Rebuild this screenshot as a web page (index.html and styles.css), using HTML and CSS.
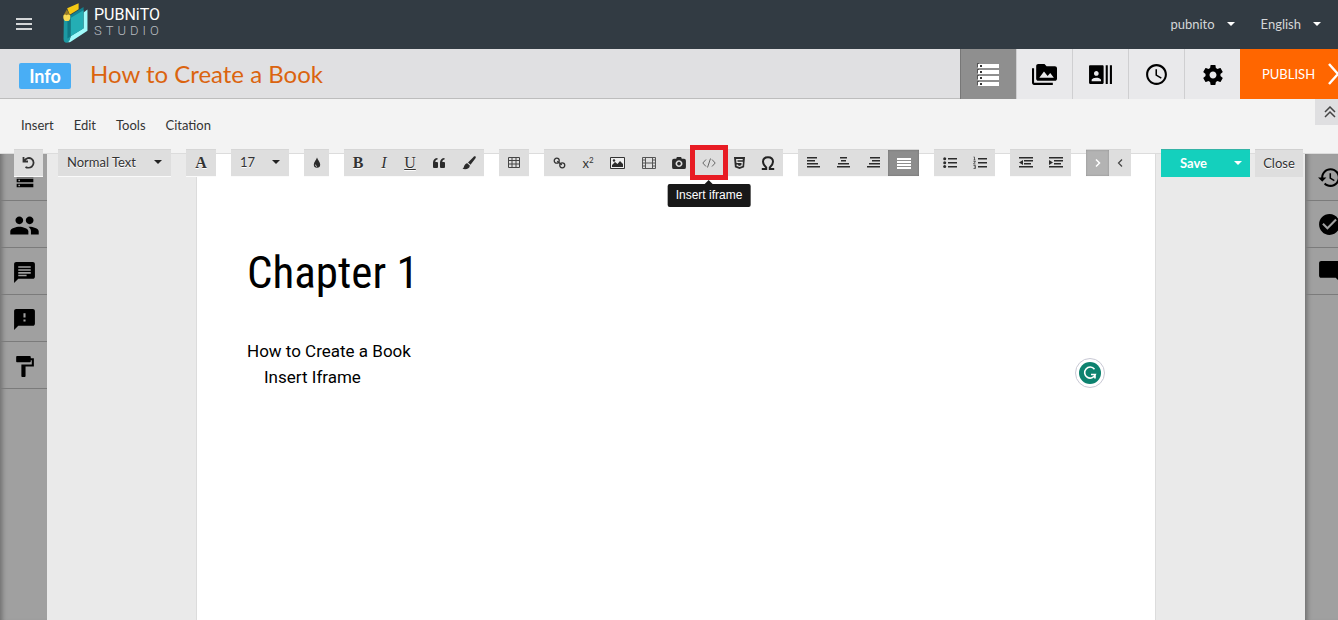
FILE: index.html
```html
<!DOCTYPE html>
<html lang="en">
<head>
<meta charset="utf-8">
<title>Pubnito Studio</title>
<meta name="viewport" content="width=device-width, initial-scale=1">
<link rel="stylesheet" href="styles.css">
</head>
<body>
<header class="topbar">
  <button class="menu-toggle" aria-label="Open menu"><span></span><span></span><span></span></button>
  <a class="brand" href="#">
    <svg class="brand-mark" viewBox="0 0 75 122" aria-hidden="true">
      <path fill="#f5c914" d="M12 16L47 1v18L20 36z"/>
      <path fill="#128391" d="M20 38L62 12v14L22 50z"/>
      <path fill="#a0fbfb" d="M62 29l12-9v65L23 118q-5 3-12 1 9-2 12-18l39-24z"/>
      <path fill="#24aeb4" d="M22 46l40-24v56L22 102z"/>
      <path fill="#1c99a3" d="M2 48h9l11-2v56q-1 16-11 19-10 0-10-12z"/>
      <path fill="#0f7884" d="M13 52l9-5v55l-9 6z"/>
      <path fill="#987c26" d="M11 20l10 17-10 3-10-3z"/>
      <path fill="#f8dc55" d="M1 37q5-4 9 0 6-4 11 0c2 9-1 17-6 18H6C1 52-1 45 1 37z"/>
    </svg>
    <span class="brand-text"><b>PUBNiTO</b><i>STUDIO</i></span>
  </a>
  <nav class="account" aria-label="Account">
    <button class="account-item">pubnito <span class="caret"></span></button>
    <button class="account-item">English <span class="caret"></span></button>
  </nav>
</header>

<section class="titlebar">
  <button class="info">Info</button>
  <h1 class="book-title">How to Create a Book</h1>
  <nav class="tabs" aria-label="Book sections">
    <button class="tab tab-active" aria-label="Contents"><svg viewBox="0 0 24 26" width="24" height="26"><path fill="#555" d="M0 1h2v4H0zM0 7h2v4H0zM0 13h2v4H0zM0 19h2v4H0z"/><path fill="#fff" d="M1 2h21v4H1zM1 8h21v4H1zM1 14h21v4H1zM1 20h21v4H1z"/><path fill="#333" d="M3 3h2v2H3zM3 9h2v2H3zM3 15h2v2H3zM3 21h2v2H3z"/></svg></button>
    <button class="tab" aria-label="Media"><svg viewBox="0 0 24 24" width="25" height="25"><path d="M2 6H0v5h.01L0 20c0 1.100.9 2 2 2h18v-2H2V6zm20-2h-8l-2-2H6c-1.100 0-1.990.9-1.990 2L4 16c0 1.100.9 2 2 2h16c1.100 0 2-.9 2-2V6c0-1.100-.9-2-2-2zM7 15l4.500-6 3.500 4.510 2.500-3.010L21 15H7z"/></svg></button>
    <button class="tab" aria-label="Authors"><svg viewBox="0 0 24 24" width="25" height="25"><path d="M21 3v18h2V3h-2zm-4 18h2V3h-2v18zM14 3H2c-.55 0-1 .45-1 1v16c0 .55.45 1 1 1h12c.55 0 1-.45 1-1V4c0-.55-.45-1-1-1zM8 8.750c1.240 0 2.250 1.010 2.250 2.250S9.240 13.250 8 13.250 5.750 12.240 5.750 11 6.760 8.750 8 8.750zM12.500 18.500h-9v-1.250c0-1.500 3-2.250 4.500-2.250s4.500.75 4.500 2.250z"/></svg></button>
    <button class="tab" aria-label="History"><svg viewBox="0 0 24 24" width="25" height="25"><path d="M11.990 2C6.470 2 2 6.480 2 12s4.470 10 9.990 10C17.520 22 22 17.520 22 12S17.520 2 11.990 2zM12 20c-4.420 0-8-3.580-8-8s3.580-8 8-8 8 3.580 8 8-3.580 8-8 8zm.5-13H11v6l5.250 3.150.75-1.230-4.500-2.670z"/></svg></button>
    <button class="tab" aria-label="Settings"><svg viewBox="0 0 24 24" width="24" height="24"><path d="M19.430 12.980c.04-.32.07-.64.07-.98s-.03-.66-.07-.98l2.110-1.650c.19-.15.24-.42.12-.64l-2-3.460c-.12-.22-.39-.3-.61-.22l-2.490 1c-.52-.4-1.080-.73-1.690-.98l-.38-2.650C14.460 2.180 14.250 2 14 2h-4c-.25 0-.46.18-.49.42l-.38 2.650c-.61.25-1.170.59-1.690.98l-2.490-1c-.23-.09-.49 0-.61.22l-2 3.460c-.13.22-.07.49.12.64l2.110 1.650c-.04.32-.07.65-.07.98s.03.66.07.98l-2.110 1.650c-.19.15-.24.42-.12.64l2 3.460c.12.22.39.3.61.22l2.490-1c.52.4 1.080.73 1.690.98l.38 2.650c.03.24.24.42.49.42h4c.25 0 .46-.18.49-.42l.38-2.650c.61-.25 1.170-.59 1.690-.98l2.490 1c.23.09.49 0 .61-.22l2-3.460c.12-.22.07-.49-.12-.64l-2.110-1.650zM12 15.500c-1.930 0-3.500-1.570-3.500-3.500s1.570-3.500 3.500-3.500 3.500 1.570 3.500 3.500-1.570 3.500-3.500 3.500z"/></svg></button>
  </nav>
  <button class="publish">PUBLISH <svg viewBox="0 0 14 24" width="14" height="24"><path d="M2 2l9 10-9 10" fill="none" stroke="#fff" stroke-width="2.500"/></svg></button>
</section>

<section class="menubar">
  <nav class="menus" aria-label="Editor menu">
    <button class="menu">Insert</button>
    <button class="menu">Edit</button>
    <button class="menu">Tools</button>
    <button class="menu">Citation</button>
  </nav>
  <button class="collapse" aria-label="Collapse"><svg viewBox="0 0 12 12" width="12" height="12"><path d="M1 6l5-5 5 5M1 11l5-5 5 5" fill="none" stroke="#444" stroke-width="1.500"/></svg></button>
</section>

<main class="workspace">
  <div class="toolbar" role="toolbar" aria-label="Formatting">
    <div class="group"><button class="tool w29" aria-label="Undo"><svg viewBox="0 0 13 13" width="13" height="13"><path d="M1.500 1v4.500H6M2 5.200C4 1.600 7.500 1.500 9.500 2.700c3 2 2.500 6.300.2 8C8 12 5 12 3.500 11" fill="none" stroke="#333" stroke-width="1.800"/></svg></button></div>
    <div class="group select-group w113"><select class="pick" aria-label="Text style"><option>Normal Text</option></select><span class="caret dark"></span></div>
    <div class="group"><button class="tool serif w30" aria-label="Font"><b>A</b></button></div>
    <div class="group select-group w58"><select class="pick" aria-label="Font size"><option>17</option></select><span class="caret dark"></span></div>
    <div class="group"><button class="tool w25" aria-label="Text color"><svg viewBox="0 0 10 14" width="8" height="12"><path d="M5 0c.8 3 4 5.500 4 9a4 4 0 0 1-8 0c0-3.500 3.200-6 4-9z"/><path d="M3 9q0 2 2 2.500" fill="none" stroke="#ddd"/></svg></button></div>
    <div class="group">
      <button class="tool serif w28" aria-label="Bold"><b>B</b></button>
      <button class="tool serif w24" aria-label="Italic"><i>I</i></button>
      <button class="tool serif w28" aria-label="Underline"><u>U</u></button>
      <button class="tool w30" aria-label="Quote"><svg viewBox="0 0 14 12" width="14" height="12"><path d="M5.500 1v1.500C4 2.700 3.300 3.800 3.300 5H5q1 0 1 1v4q0 1-1 1H2q-1 0-1-1V5.500C1 3 3 1 5.500 1zM12.500 1v1.500C11 2.700 10.300 3.800 10.300 5H12q1 0 1 1v4q0 1-1 1H9q-1 0-1-1V5.500C8 3 10 1 12.500 1z"/></svg></button>
      <button class="tool w30" aria-label="Brush"><svg viewBox="0 0 14 14" width="14" height="14"><path d="M13.500.5c.8.8-.2 2-.2 2L8.500 8.800 6 6.500 11.500 1s1.200-1.200 2-.5zM5.300 7.200l2.500 2.300c.3 3-4 4.500-7.300 3.200C2.500 12 1.800 7.500 5.300 7.200z"/></svg></button>
    </div>
    <div class="group"><button class="tool w30" aria-label="Table"><svg viewBox="0 0 12 11" width="12" height="11"><path d="M.5.500h11v10H.5zM.5 3.500h11M.5 7h11M4 .5v10M8 .5v10" fill="none" stroke="#444"/></svg></button></div>
    <div class="group">
      <button class="tool w30" aria-label="Link"><svg viewBox="0 0 14 13" width="13" height="12" fill="none" stroke="#333" stroke-width="1.400"><circle cx="4" cy="4" r="2.700"/><circle cx="10" cy="9" r="2.700"/><path d="M4.500 4.500l5 4"/></svg></button>
      <button class="tool super w28" aria-label="Superscript">x<sup>2</sup></button>
      <button class="tool w31" aria-label="Image"><svg viewBox="0 0 15 12" width="15" height="12"><path d="M.5.500h14v11H.5z" fill="#eee" stroke="#333"/><path d="M2 10V8l3-3 2.500 2L10 4l3 3v3z"/><circle cx="4" cy="3.500" r="1.200"/></svg></button>
      <button class="tool w31" aria-label="Video"><svg viewBox="0 0 14 12" width="14" height="12"><path d="M.5.500h13v11H.5zM3.500.5v11M10.500.5v11M3.500 6h7M.5 3h3M.5 6h3M.5 9h3M10.500 3h3M10.500 6h3M10.500 9h3" fill="none" stroke="#555"/></svg></button>
      <button class="tool w30" aria-label="Camera"><svg viewBox="0 0 15 13" width="14" height="12"><path fill-rule="evenodd" d="M4.500 2l.7-2h4.600l.7 2H13q2 0 2 2v7q0 2-2 2H2q-2 0-2-2V4q0-2 2-2zM7.500 3.500a3.700 3.700 0 1 0 .01 0zM7.500 5.200a2 2 0 1 1-.01 0z"/></svg></button>
      <button class="tool marked w30" aria-label="Insert iframe" aria-describedby="iframe-tip"><svg viewBox="0 0 14 10" width="14" height="10"><path d="M4 1.500L.8 5 4 8.500M10 1.500L13.200 5 10 8.500M8.500.5l-3 9" fill="none" stroke="#666"/></svg><span class="tooltip" id="iframe-tip" role="tooltip">Insert iframe</span></button>
      <button class="tool w30" aria-label="HTML"><svg viewBox="0 0 12 13" width="11" height="12"><path d="M0 0h12l-1 11-5 2-5-2z"/><path d="M9.500 2.800H3l.3 3h5.700l-.3 3.500L6 10.300l-2.500-.9V8" fill="none" stroke="#e8e8e8" stroke-width="1.300"/></svg></button>
      <button class="tool omega w29" aria-label="Special character"><svg viewBox="0 0 14 14" width="14" height="14"><path d="M.8 13h4.400v-1.500C3 9.500 2 8 2 5.800 2 3 4 1.200 7 1.200s5 1.800 5 4.600c0 2.200-1 3.700-3.200 5.700V13h4.400" fill="none" stroke="#222" stroke-width="2"/></svg></button>
    </div>
    <div class="group">
      <button class="tool w30" aria-label="Align left"><svg viewBox="0 0 13 11" width="13" height="11"><path d="M0 0h10v1.500H0zM0 3h8v1.500H0zM0 6h11v1.500H0zM0 9h13v1.500H0z"/></svg></button>
      <button class="tool w30" aria-label="Align center"><svg viewBox="0 0 13 11" width="13" height="11"><path d="M3 0h7v1.500H3zM4 3h5v1.500H4zM1 6h11v1.500H1zM0 9h13v1.500H0z"/></svg></button>
      <button class="tool w30" aria-label="Align right"><svg viewBox="0 0 13 11" width="13" height="11"><path d="M3 0h10v1.500H3zM5 3h8v1.500H5zM2 6h11v1.500H2zM0 9h13v1.500H0z"/></svg></button>
      <button class="tool pressed w31" aria-label="Justify" aria-pressed="true"><svg viewBox="0 0 14 11" width="14" height="11"><path fill="#fff" d="M0 0h14v2H0zM0 3h14v2H0zM0 6h14v2H0zM0 9h14v2H0z"/></svg></button>
    </div>
    <div class="group">
      <button class="tool w31" aria-label="Bulleted list"><svg viewBox="0 0 14 11" width="14" height="11"><path d="M5 1h9v1.500H5zM5 5h9v1.500H5zM5 9h9v1.500H5z"/><circle cx="1.700" cy="1.700" r="1.500"/><circle cx="1.700" cy="5.700" r="1.500"/><circle cx="1.700" cy="9.500" r="1.500"/></svg></button>
      <button class="tool w30" aria-label="Numbered list"><svg viewBox="0 0 14 13" width="14" height="13"><path d="M5 2h9v1.500H5zM5 6h9v1.500H5zM5 10h9v1.500H5z"/><path d="M.5 1h1v3M.5 4h2M.5 5.500h2L.5 8h2M.5 9.500h2v3h-2M1 11h1" fill="none" stroke="#444" stroke-width=".8"/></svg></button>
    </div>
    <div class="group">
      <button class="tool w31" aria-label="Outdent"><svg viewBox="0 0 14 11" width="14" height="11"><path d="M0 0h14v1.500H0zM5 3h9v1.500H5zM5 6h7v1.500H5zM0 9h14v1.500H0zM4 3v5L0 5.500z"/></svg></button>
      <button class="tool w30" aria-label="Indent"><svg viewBox="0 0 14 11" width="14" height="11"><path d="M0 0h14v1.500H0zM5 3h9v1.500H5zM5 6h7v1.500H5zM0 9h14v1.500H0zM0 3v5l4-2.500z"/></svg></button>
    </div>
    <div class="group">
      <button class="tool dimmed w23" aria-label="Left to right"><svg viewBox="0 0 6 8" width="6" height="8"><path d="M1 .5L4.500 4 1 7.500" fill="none" stroke="#fff" stroke-width="1.500"/></svg></button>
      <button class="tool w22" aria-label="Right to left"><svg viewBox="0 0 6 8" width="6" height="8"><path d="M5 .5L1.500 4 5 7.500" fill="none" stroke="#444" stroke-width="1.200"/></svg></button>
    </div>
    <div class="finish">
      <div class="save-group"><button class="save">Save</button><button class="save-more" aria-label="More save options"><span class="caret"></span></button></div>
      <button class="close">Close</button>
    </div>
  </div>

  <nav class="rail" aria-label="Tools">
    <button class="rail-item" aria-label="Contents"><svg viewBox="0 0 24 24" width="20" height="24"><path d="M2 23h20v-4H2v4zm2-3h2v2H4v-2zM2 7v4h20V7H2zm4 3H4V8h2v2zm-4 7h20v-4H2v4zm2-3h2v2H4v-2z"/></svg></button>
    <button class="rail-item" aria-label="People"><svg viewBox="0 0 24 24" width="31" height="31"><path d="M16 11c1.660 0 2.990-1.340 2.990-3S17.660 5 16 5c-1.660 0-3 1.340-3 3s1.340 3 3 3zm-8 0c1.660 0 2.990-1.340 2.990-3S9.660 5 8 5C6.340 5 5 6.340 5 8s1.340 3 3 3zm0 2c-2.330 0-7 1.170-7 3.500V19h14v-2.500c0-2.330-4.670-3.500-7-3.500zm8 0c-.29 0-.62.02-.97.05 1.160.84 1.970 1.970 1.970 3.450V19h6v-2.500c0-2.330-4.670-3.500-7-3.500z"/></svg></button>
    <button class="rail-item" aria-label="Comments"><svg viewBox="0 0 24 24" width="25" height="25"><path d="M20 2H4c-1.100 0-1.990.9-1.990 2L2 22l4-4h14c1.100 0 2-.9 2-2V4c0-1.100-.9-2-2-2z"/><path fill="#a0a0a0" d="M6 6h12v1.500H6zM6 8.800h12v1.500H6zM6 11.600h12v1.500H6zM6 14.200h8v1.300H6z"/></svg></button>
    <button class="rail-item" aria-label="Feedback"><svg viewBox="0 0 24 24" width="25" height="25"><path d="M20 2H4c-1.100 0-1.990.9-1.990 2L2 22l4-4h14c1.100 0 2-.9 2-2V4c0-1.100-.9-2-2-2zm-7 12h-2v-2h2v2zm0-4h-2V6h2v4z"/></svg></button>
    <button class="rail-item" aria-label="Styles"><svg viewBox="0 0 24 24" width="25" height="25"><path d="M18 4V3c0-.55-.45-1-1-1H5c-.55 0-1 .45-1 1v4c0 .55.45 1 1 1h12c.55 0 1-.45 1-1V6h1v4H9v11c0 .55.45 1 1 1h2c.55 0 1-.45 1-1v-9h8V4h-3z"/></svg></button>
  </nav>

  <article class="page">
    <h2 class="chapter">Chapter 1</h2>
    <p class="line">How to Create a Book</p>
    <p class="line indented">Insert Iframe</p>
    <button class="assistant" aria-label="Writing assistant"><svg viewBox="0 0 22 22" width="22" height="22"><circle cx="11" cy="11" r="11" fill="#0d826f"/><path d="M15.500 7.200A5.500 5.500 0 1 0 16.300 12.500H12M16 12.500v4" fill="none" stroke="#fff" stroke-width="1.600"/></svg></button>
  </article>

  <nav class="rail rail-right" aria-label="Review">
    <button class="rail-item" aria-label="Versions"><svg viewBox="0 0 24 24" width="25" height="25"><path d="M13 3c-4.970 0-9 4.030-9 9H1l3.890 3.890.07.14L9 12H6c0-3.870 3.130-7 7-7s7 3.130 7 7-3.130 7-7 7c-1.930 0-3.680-.79-4.940-2.060l-1.420 1.420C8.270 19.990 10.510 21 13 21c4.970 0 9-4.030 9-9s-4.030-9-9-9zm-1 5v5l4.280 2.540.72-1.210-3.500-2.080V8H12z"/></svg></button>
    <button class="rail-item" aria-label="Approve"><svg viewBox="0 0 24 24" width="25" height="25"><path d="M12 2C6.480 2 2 6.480 2 12s4.480 10 10 10 10-4.480 10-10S17.520 2 12 2zm-2 15l-5-5 1.410-1.410L10 14.170l7.590-7.590L19 8l-9 9z"/></svg></button>
    <button class="rail-item" aria-label="Discussion"><svg viewBox="0 0 24 24" width="25" height="25"><path d="M22 4c0-1.100-.9-2-2-2H4c-1.100 0-2 .9-2 2v12c0 1.100.9 2 2 2h14l4 4V4z"/></svg></button>
  </nav>
</main>
</body>
</html>
```

FILE: styles.css
```css
* { box-sizing: border-box; }

body {
  margin: 0;
  min-height: 100vh;
  display: flex;
  flex-direction: column;
  overflow: hidden;
  background: #eaeaea;
  color: #333;
  font-family: Lato, "Liberation Sans", sans-serif;
  font-size: 13px;
}

button, select {
  margin: 0;
  padding: 0;
  border: 0;
  border-radius: 0;
  background: none;
  color: inherit;
  font: inherit;
}

svg { display: block; flex: none; }

.caret {
  width: 0;
  height: 0;
  border: 4px solid transparent;
  border-top-color: #fff;
  border-bottom: 0;
}

.caret.dark { border-top-color: #222; }

/* Top bar */
.topbar {
  display: flex;
  align-items: center;
  height: 49px;
  padding: 0 17px 1px 16px;
  background: #323b43;
  color: #d4d6d8;
}

.menu-toggle { display: grid; gap: 3px; width: 16px; }
.menu-toggle span { height: 2px; background: #d4d6d8; }

.brand {
  display: flex;
  align-items: center;
  gap: 6px;
  margin-left: 31px;
  padding-bottom: 2px;
  text-decoration: none;
}

.brand-mark { width: 25px; height: 40px; }

.brand-text {
  display: grid;
  font-family: Roboto, sans-serif;
  line-height: 16px;
}

.brand-text b { color: #fff; font-size: 16px; font-weight: 400; }
.brand-text i {
  color: #b9bdc1;
  font-size: 13px;
  font-style: normal;
  font-weight: 300;
  letter-spacing: 4px;
}

.account { display: flex; gap: 26px; margin-left: auto; }
.account-item { display: flex; align-items: center; gap: 12px; }

/* Title bar */
.titlebar {
  display: flex;
  align-items: flex-start;
  height: 50px;
  padding-left: 19px;
  background: #e0e0e2;
  border-bottom: 1px solid #bdbdbd;
}

.info {
  width: 52px;
  height: 26px;
  margin-top: 14px;
  border-radius: 2px;
  background: #49aef5;
  color: #fff;
  font-size: 18px;
  font-weight: 700;
}

.book-title {
  margin: 0 0 0 19px;
  color: #db640f;
  font-size: 24px;
  font-weight: 400;
  line-height: 50px;
}

.tabs { display: flex; margin-left: auto; }

.tab {
  display: grid;
  place-items: center;
  width: 56px;
  height: 51px;
  border-left: 1px solid #cfcfd1;
  background: #e9e9eb;
}

.tab-active { background: #8f8f8f; border-left-color: #777; }

.publish {
  display: flex;
  align-items: center;
  gap: 12px;
  width: 98px;
  height: 50px;
  padding-left: 22px;
  overflow: hidden;
  background: #ff6600;
  color: #fff;
}

/* Menu bar */
.menubar {
  display: flex;
  justify-content: space-between;
  align-items: flex-start;
  height: 55px;
  padding-left: 21px;
  background: #f3f3f3;
  border-bottom: 1px solid #dcdcdc;
}

.menus { display: flex; gap: 20px; }
.menu { height: 52px; line-height: 52px; }

.collapse {
  display: grid;
  place-items: center;
  width: 23px;
  height: 26px;
  padding-left: 6px;
  background: #dfdfe1;
}

/* Workspace */
.workspace {
  position: relative;
  flex: 1;
  display: flex;
  justify-content: space-between;
}

/* The toolbar straddles the menu bar's lower edge */
.toolbar {
  position: absolute;
  z-index: 1;
  top: -5px;
  left: 0;
  right: 0;
  display: flex;
  align-items: flex-start;
  gap: 15px;
  padding: 0 35px 0 14px;
}

.group {
  display: flex;
  height: 27px;
  border-top: 1px solid #d6d6d6;
  background: #dedede;
  box-shadow: 0 1px 0 #fafafa;
}

.tool {
  display: grid;
  place-items: center;
  height: 25px;
  fill: #2b2b2b;
}

.w22 { width: 22px; }
.w23 { width: 23px; }
.w24 { width: 24px; }
.w25 { width: 25px; }
.w28 { width: 28px; }
.w29 { width: 29px; }
.w30 { width: 30px; }
.w31 { width: 31px; }
.w58 { width: 58px; }
.w113 { width: 113px; }

.serif {
  font-family: "Liberation Serif", serif;
  font-size: 16px;
  text-shadow: 0 1px 0 #fff;
}

.super { display: block; font-size: 13px; line-height: 26px; }
.super sup { font-size: 8px; line-height: 0; }

.omega { padding-right: 2px; }

.select-group { align-items: center; padding: 0 9px 2px; }

.pick {
  flex: 1;
  min-width: 0;
  appearance: none;
  text-shadow: 0 1px 0 #fff;
}

.pressed, .dimmed { height: 26px; }
.pressed { background: #8d8d8d; box-shadow: inset 0 0 2px #666; }
.dimmed { background: #b3b3b3; box-shadow: inset 0 0 2px #888; }

.marked { position: relative; }

.marked::before {
  content: "";
  position: absolute;
  inset: -5px -4px;
  border: 5px solid #e81c24;
}

.tooltip {
  position: absolute;
  top: 34px;
  left: 50%;
  transform: translateX(-50%);
  padding: 0 8px;
  border-radius: 2px;
  background: #181818;
  color: #fff;
  font: 12px/23px "Liberation Sans", sans-serif;
  white-space: nowrap;
}

.tooltip::before {
  content: "";
  position: absolute;
  top: -4px;
  left: 50%;
  margin-left: -5px;
  border: 5px solid transparent;
  border-top: 0;
  border-bottom-color: #181818;
}

.finish { display: flex; gap: 5px; margin-left: auto; }
.save-group { display: flex; }

.save, .save-more {
  height: 28px;
  padding-bottom: 2px;
  border-top: 1px solid #35b3a6;
  background: #14d0bd;
  color: #fff;
  font-weight: 700;
}

.save { width: 65px; }
.save-more { display: grid; place-items: center; width: 24px; }

.close {
  width: 48px;
  height: 28px;
  padding-bottom: 2px;
  border-top: 1px solid #d0d0d0;
  background: #dedede;
  text-shadow: 0 1px 0 #fff;
}

/* Side rails */
.rail {
  flex: none;
  width: 47px;
  background: #a0a0a0;
  box-shadow: inset 6px 0 5px -4px #6c6c6c;
}

.rail-item {
  display: grid;
  place-items: center;
  width: 100%;
  height: 47px;
  padding: 2px 0 0 2px;
  border-bottom: 1px solid #7b7b7b;
}

.rail-right { width: 33px; overflow: hidden; }
.rail-right .rail-item { justify-content: start; padding: 1px 0 0 12px; }

/* Document */
.page {
  position: relative;
  flex: 1;
  margin: 0 149px;
  padding: 84px 50px;
  border: 1px solid #dcdcdc;
  border-width: 0 1px;
  background: #fff;
  color: #000;
  font-family: Roboto, sans-serif;
  font-size: 17px;
}

.chapter {
  margin: 0 0 30px;
  font: 400 45px/70px "Roboto Condensed", Roboto, sans-serif;
}

.line { margin: 0; line-height: 26px; }
.indented { padding-left: 17px; }

.assistant {
  position: absolute;
  top: 204px;
  right: 50px;
  display: grid;
  place-items: center;
  width: 30px;
  height: 30px;
  border: 1px solid #c8c8d4;
  border-radius: 50%;
  background: #fff;
}
```
